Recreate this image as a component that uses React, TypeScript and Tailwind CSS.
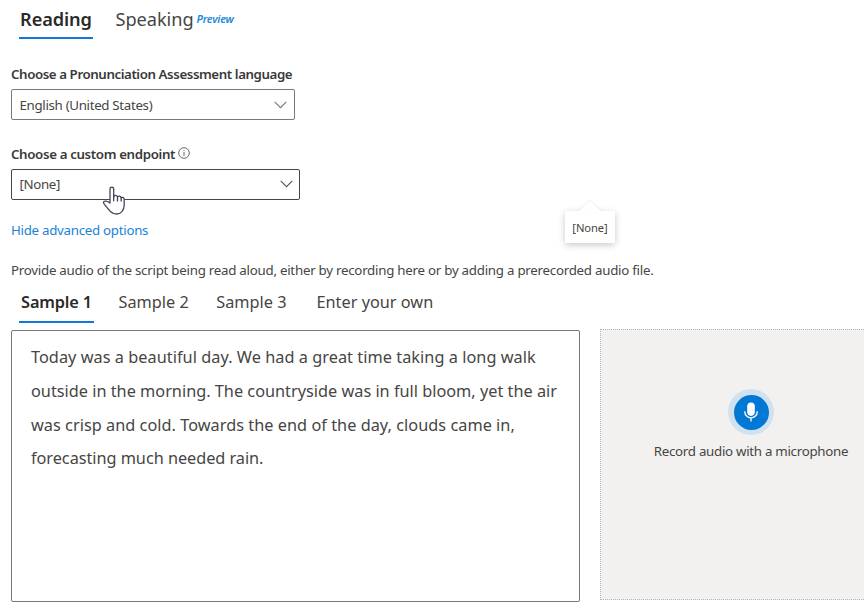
import React from "react";

function Chevron({ color }: { color: string }) {
  return (
    <svg className="-mt-px" width="13" height="8" viewBox="0 0 13 8" fill="none" stroke={color} strokeWidth="1.1">
      <path d="M0.7 0.8 6.5 6.6 12.3 0.8" />
    </svg>
  );
}

function InfoIcon() {
  return (
    <svg className="mb-[3px] ml-[3px]" width="12" height="12" viewBox="0 0 12 12" fill="none" stroke="#5a5957">
      <circle cx="6" cy="6" r="5.3" strokeWidth="0.9" />
      <path d="M6 5v4M6 3v1.1" strokeWidth="0.9" />
    </svg>
  );
}

function MicIcon() {
  return (
    <svg width="14" height="20" viewBox="0 0 14 20" fill="none" stroke="#fff">
      <rect x="3.2" y="0.5" width="7.6" height="13.4" rx="3.8" fill="#fff" stroke="none" />
      <path d="M0.8 9.3v0.6a6.2 5.9 0 0 0 12.4 0v-0.6M7 16v3.6" strokeWidth="1.3" />
    </svg>
  );
}

function HandCursor() {
  return (
    <svg className="absolute left-[102px] top-[186px]" width="24" height="30" viewBox="0 0 24 30" fill="#fff" stroke="#45455a" strokeWidth="1.3" strokeLinejoin="round" strokeLinecap="round">
      <path d="M8 17V3.3C8 .4 11.7 .4 11.7 3.3V11C12.2 8.8 15.3 9 15.5 11.3C16.2 9.5 19 9.9 19.2 12.1C20 10.7 22.2 11.3 22.2 13.4V19C22.2 24.5 18.8 28 14.5 28C10.6 28 8.6 26 6.7 23.6L1.7 17.4C1 15.5 2.3 14.9 4 15.1C5.6 15.3 6.8 15.9 8 17Z" />
      <path d="M11.7 10.5v4.3M15.5 11.3v3.7M19.2 12.1v3" />
    </svg>
  );
}

function Select({ value, className, chevron }: { value: string; className: string; chevron: string }) {
  return (
    <div className={"flex h-[31px] items-center justify-between rounded-[2px] border bg-white pl-[7.5px] text-[13.3px] " + className}>
      <span>{value}</span>
      <Chevron color={chevron} />
    </div>
  );
}

export default function App() {
  return (
    <div className="relative h-[609px] w-[864px] overflow-hidden whitespace-nowrap bg-white pl-[11px] font-['Noto_Sans',sans-serif] text-[13.3px] text-[#464543]">
      <nav className="flex h-[39px] pl-2">
        <div className="flex h-[39px] w-[74px] justify-center border-b-2 border-[#0f78d8] text-[18.2px] font-semibold leading-[39px] tracking-[-0.1px] text-[#2b2a29]">Reading</div>
        <div className="ml-[22.5px] flex text-[18.2px] leading-[39px] tracking-[-0.05px]">
          Speaking
          <span className="ml-[3px] text-[10.8px] font-semibold italic leading-[37px] tracking-[-0.2px] text-[#2088d8]">Preview</span>
        </div>
      </nav>

      <div className="mt-[25px] h-[25px] font-semibold leading-5 tracking-[-0.42px] text-[#3a3937]">Choose a Pronunciation Assessment language</div>
      <Select value="English (United States)" className="w-[284px] border-[#7a7978] pr-[7px] pt-[2px] tracking-[-0.32px]" chevron="#777" />

      <div className="mt-[24px] flex h-[25px] items-start text-[#3a3937]">
        <div className="flex h-5 items-center font-semibold leading-5 tracking-[-0.36px]">
          Choose a custom endpoint
          <InfoIcon />
        </div>
      </div>
      <Select value="[None]" className="w-[289px] border-[#484644] pr-[6px] tracking-[-0.36px]" chevron="#555" />

      <a className="mt-5 block h-5 leading-5 tracking-[-0.28px] text-[#1883d7]">Hide advanced options</a>
      <p className="mt-5 h-5 leading-5 tracking-[-0.25px]">Provide audio of the script being read aloud, either by recording here or by adding a prerecorded audio file.</p>

      <nav className="mt-[1px] flex h-[42px] pl-2 text-[16.3px] leading-[42px]">
        <div className="flex w-[75px] justify-center border-b-2 border-[#0f78d8] font-semibold tracking-[-0.15px] text-[#2b2a29]">Sample 1</div>
        <div className="ml-[24.5px]">Sample 2</div>
        <div className="ml-[27.5px]">Sample 3</div>
        <div className="ml-[30px]">Enter your own</div>
      </nav>

      <div className="mt-[6px] flex items-start">
        <div className="mt-[1px] h-[272px] w-[569px] shrink-0 rounded-[2px] border border-[#7a7978] pl-[19px] pt-[10px] text-[16.3px] leading-[33.8px]">
          <p className="tracking-[0.04px]">Today was a beautiful day. We had a great time taking a long walk</p>
          <p>outside in the morning. The countryside was in full bloom, yet the air</p>
          <p className="tracking-[0.03px]">was crisp and cold. Towards the end of the day, clouds came in,</p>
          <p className="tracking-[-0.04px]">forecasting much needed rain.</p>
        </div>
        <div className="ml-5 flex h-[271px] w-[302px] shrink-0 flex-col items-center border border-dotted border-[#b8b6b4] bg-[#f2f1f0] pt-[59px]">
          <div className="flex size-[46px] items-center justify-center rounded-full bg-[#d0e2f0]">
            <div className="flex size-[35px] items-center justify-center rounded-full bg-[#0078d4]">
              <MicIcon />
            </div>
          </div>
          <div className="mt-[6px] leading-5 tracking-[-0.28px]">Record audio with a microphone</div>
        </div>
      </div>

      <div className="absolute left-[565px] top-[211px] flex h-[32px] w-[50px] items-center justify-center rounded-[1px] bg-white text-[11.2px] tracking-[-0.1px] shadow-[0_2px_7px_rgba(0,0,0,0.22)]">
        <svg className="absolute left-[13px] top-[-11px] drop-shadow-[0_-1px_1px_rgba(0,0,0,0.08)]" width="24" height="12" viewBox="0 0 24 12" fill="#fff">
          <path d="M0 12 12 1 24 12Z" />
        </svg>
        <span className="relative pt-[2px]">[None]</span>
      </div>
      <HandCursor />
    </div>
  );
}
